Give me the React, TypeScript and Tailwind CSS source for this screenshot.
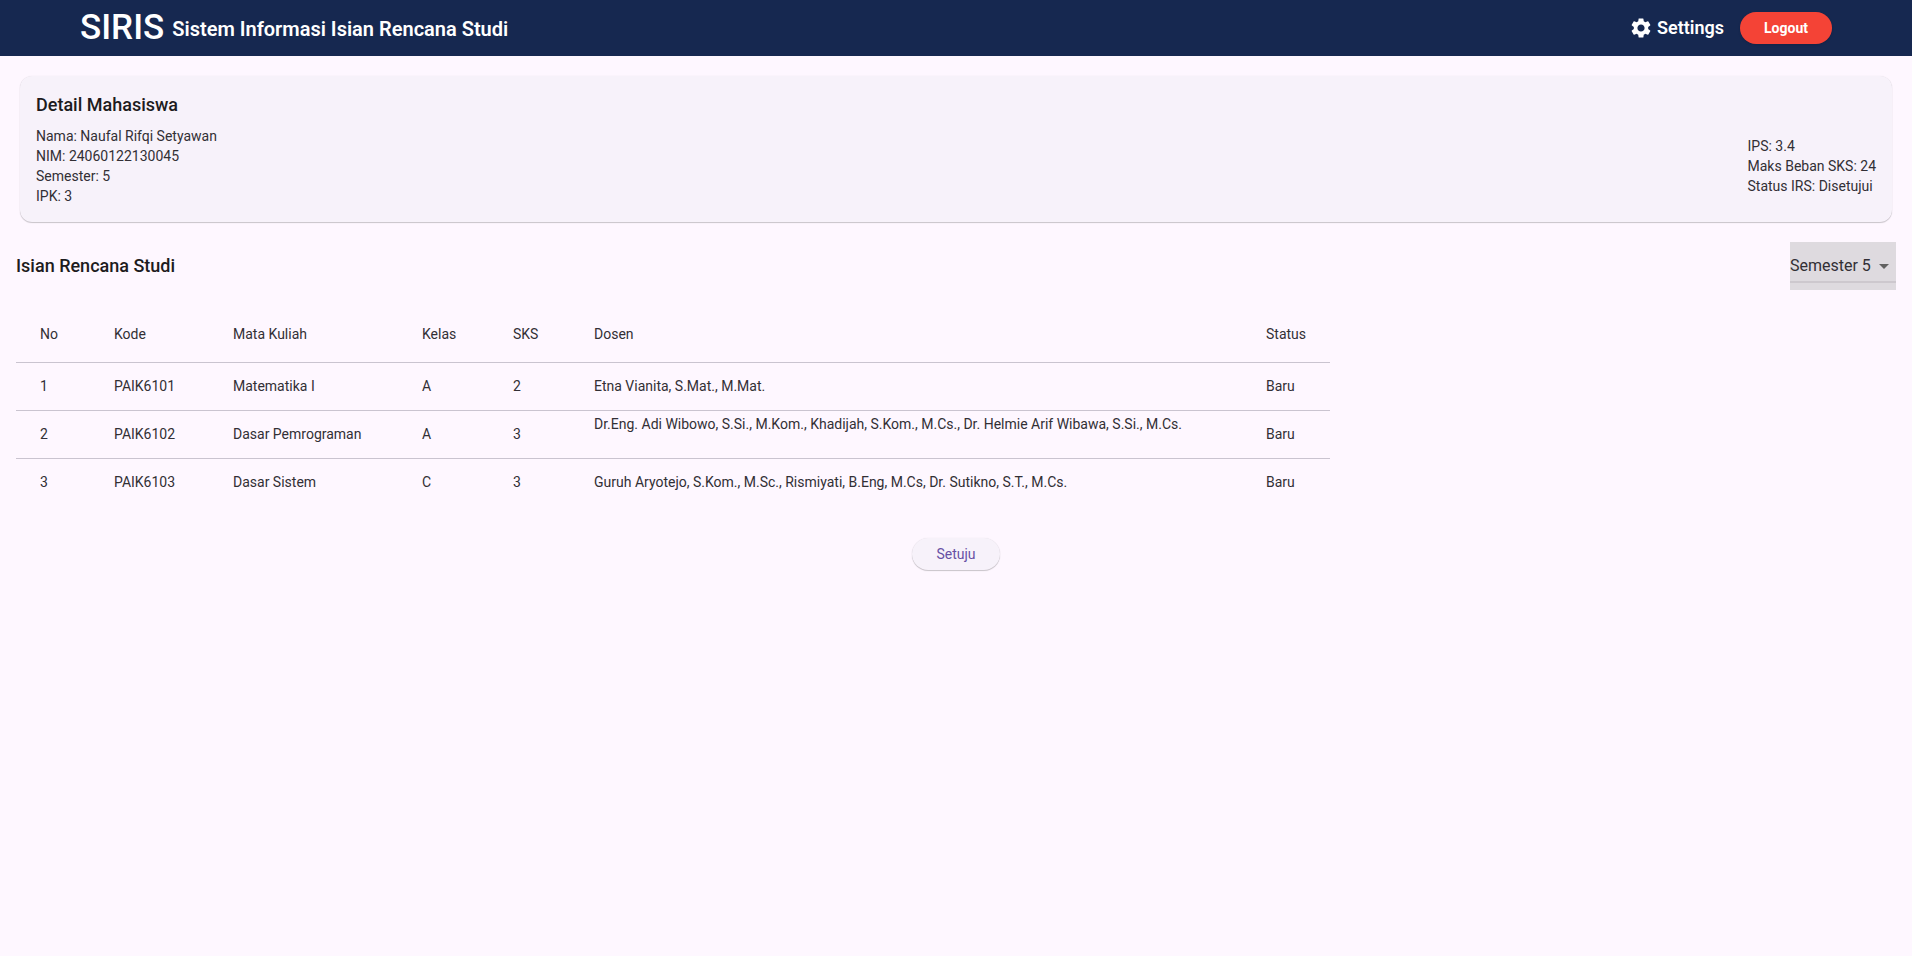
import { MdSettings } from "react-icons/md";

type Course = {
  no: number;
  kode: string;
  nama: string;
  kelas: string;
  sks: number;
  dosen: string;
  status: string;
};

const courses: Course[] = [
  { no: 1, kode: "PAIK6101", nama: "Matematika I", kelas: "A", sks: 2, dosen: "Etna Vianita, S.Mat., M.Mat.", status: "Baru" },
  {
    no: 2,
    kode: "PAIK6102",
    nama: "Dasar Pemrograman",
    kelas: "A",
    sks: 3,
    dosen: "Dr.Eng. Adi Wibowo, S.Si., M.Kom., Khadijah, S.Kom., M.Cs., Dr. Helmie Arif Wibawa, S.Si., M.Cs.\n",
    status: "Baru",
  },
  {
    no: 3,
    kode: "PAIK6103",
    nama: "Dasar Sistem",
    kelas: "C",
    sks: 3,
    dosen: "Guruh Aryotejo, S.Kom., M.Sc., Rismiyati, B.Eng, M.Cs, Dr. Sutikno, S.T., M.Cs.",
    status: "Baru",
  },
];

const semesters = [1, 2, 3, 4, 5];

function Header() {
  return (
    <header className="flex h-14 items-center justify-between bg-[#162850] px-20 text-white">
      <div className="flex items-center gap-2">
        <span className="text-[35px] font-medium">SIRIS</span>
        <span className="pt-0.5 text-xl font-semibold">Sistem Informasi Isian Rencana Studi</span>
      </div>
      <div className="flex items-center gap-4">
        <a href="#settings" className="flex items-center gap-1 text-lg font-semibold">
          <MdSettings className="size-6" aria-hidden="true" />
          Settings
        </a>
        <button type="button" className="h-8 rounded-full bg-[#f44336] px-6 text-sm font-bold shadow-sm">
          Logout
        </button>
      </div>
    </header>
  );
}

function StudentCard() {
  return (
    <section className="mx-1 rounded-xl bg-[#f7f2fa] p-4 shadow-[0_1px_1px_rgba(0,0,0,0.2),0_0_1px_rgba(0,0,0,0.12)]">
      <h2 className="mb-2 text-lg/[26px] font-medium">Detail Mahasiswa</h2>
      <div className="flex items-center justify-between text-sm/5 text-[#322f35]">
        <div>
          <p>Nama: Naufal Rifqi Setyawan</p>
          <p>NIM: 24060122130045</p>
          <p>Semester: 5</p>
          <p>IPK: 3</p>
        </div>
        <div>
          <p>IPS: 3.4</p>
          <p>Maks Beban SKS: 24</p>
          <p>Status IRS: Disetujui</p>
        </div>
      </div>
    </section>
  );
}

function SemesterSelect() {
  return (
    <div className="grid h-12 items-start bg-[#dedadf]">
      <select
        aria-label="Semester"
        defaultValue={5}
        className="col-start-1 row-start-1 h-[41px] w-[106px] appearance-none border-b-2 border-[#cdc8ce] bg-transparent pt-2 text-base text-[#322f35] outline-none"
      >
        {semesters.map((s) => (
          <option key={s} value={s}>
            Semester {s}
          </option>
        ))}
      </select>
      <svg
        viewBox="0 0 24 24"
        className="pointer-events-none col-start-1 row-start-1 size-6 self-center justify-self-end fill-[#616161]"
        aria-hidden="true"
      >
        <path d="M7 10l5 5 5-5z" />
      </svg>
    </div>
  );
}

function CourseTable() {
  return (
    <table className="w-[1314px] table-fixed border-collapse text-left text-sm/5 text-[#322f35]">
      <colgroup>
        <col className="w-[98px]" />
        <col className="w-[119px]" />
        <col className="w-[189px]" />
        <col className="w-[91px]" />
        <col className="w-[81px]" />
        <col />
        <col className="w-16" />
      </colgroup>
      <thead>
        <tr className="h-14 border-b border-[#cac4d0]">
          <th className="pl-6 font-normal">No</th>
          <th className="font-normal">Kode</th>
          <th className="font-normal">Mata Kuliah</th>
          <th className="font-normal">Kelas</th>
          <th className="font-normal">SKS</th>
          <th className="font-normal">Dosen</th>
          <th className="font-normal">Status</th>
        </tr>
      </thead>
      <tbody>
        {courses.map((c) => (
          <tr key={c.no} className="h-12 border-b border-[#cac4d0] last:border-b-0">
            <td className="pl-6">{c.no}</td>
            <td>{c.kode}</td>
            <td>{c.nama}</td>
            <td>{c.kelas}</td>
            <td>{c.sks}</td>
            <td className="whitespace-pre-wrap">
              {c.dosen}
              {c.dosen.endsWith("\n") && <br />}
            </td>
            <td>{c.status}</td>
          </tr>
        ))}
      </tbody>
    </table>
  );
}

export default function App() {
  return (
    <div className="min-h-screen bg-[#fef7ff] font-['Roboto',sans-serif] text-[#1d1b20]">
      <Header />
      <main className="px-4 py-5">
        <StudentCard />
        <div className="mt-5 mb-4 flex items-center justify-between">
          <h2 className="text-lg/[26px] font-medium">Isian Rencana Studi</h2>
          <SemesterSelect />
        </div>
        <CourseTable />
        <div className="mt-8 flex justify-center">
          <button
            type="button"
            className="h-8 rounded-full bg-[#f7f2fa] px-6 text-sm text-[#6750a4] shadow-[0_1px_1px_rgba(0,0,0,0.2),0_0_1px_rgba(0,0,0,0.12)]"
          >
            Setuju
          </button>
        </div>
      </main>
    </div>
  );
}
